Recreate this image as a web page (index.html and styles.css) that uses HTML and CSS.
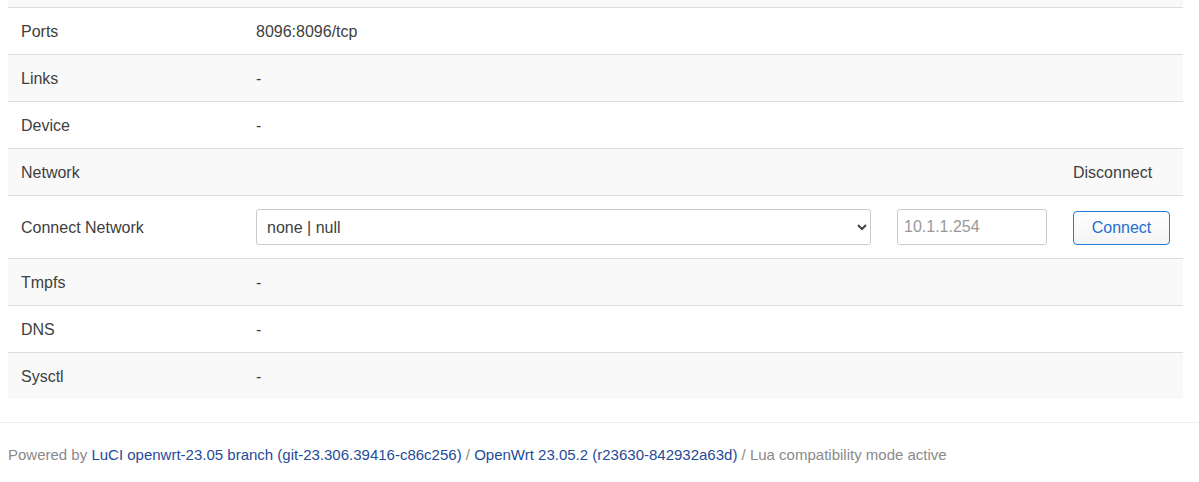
FILE: index.html
```html
<!DOCTYPE html>
<html>
<head>
<meta charset="utf-8">
<link rel="stylesheet" href="styles.css">
</head>
<body>
<div class="page">
  <div class="table">
    <div class="row row-partial"></div>
    <div class="row"><div class="cell label">Ports</div><div class="cell value">8096:8096/tcp</div></div>
    <div class="row alt"><div class="cell label">Links</div><div class="cell value">-</div></div>
    <div class="row"><div class="cell label">Device</div><div class="cell value">-</div></div>
    <div class="row alt net"><div class="cell label">Network</div><div class="cell"></div><div class="cell"></div><div class="cell">Disconnect</div></div>
    <div class="row net connect">
      <div class="cell label">Connect Network</div>
      <div class="cell"><select class="sel"><option>none | null</option></select></div>
      <div class="cell"><input class="ip" type="text" placeholder="10.1.1.254"></div>
      <div class="cell"><button class="btn">Connect</button></div>
    </div>
    <div class="row alt"><div class="cell label">Tmpfs</div><div class="cell value">-</div></div>
    <div class="row"><div class="cell label">DNS</div><div class="cell value">-</div></div>
    <div class="row alt"><div class="cell label">Sysctl</div><div class="cell value">-</div></div>
  </div>
</div>
<footer class="footer">
  <span>Powered by </span><a href="#">LuCI openwrt-23.05 branch (git-23.306.39416-c86c256)</a> / <a href="#">OpenWrt 23.05.2 (r23630-842932a63d)</a> / Lua compatibility mode active
</footer>
</body>
</html>
```

FILE: styles.css
```css
html, body {
  margin: 0;
  padding: 0;
  background: #fff;
}
body {
  font-family: "Liberation Sans", Arial, sans-serif;
  font-size: 16px;
  color: #404040;
}
.page {
  padding: 0 16px 0 8px;
}
.table {
  display: flex;
  flex-direction: column;
}
.row {
  display: grid;
  grid-template-columns: 235px 1fr;
  align-items: center;
  border-top: 1px solid #ddd;
  background: #fff;
}
.row.alt,
.row-partial {
  background: #f9f9f9;
}
.row-partial {
  height: 7px;
  border-top: none;
}
.row.net {
  grid-template-columns: 235px 641px 176px 123px;
}
.cell {
  padding: 14px 13px 12px;
  line-height: 20px;
  min-height: 20px;
}
.connect .cell {
  padding: 13px 13px;
}
.connect .label {
  padding-top: 14px;
  padding-bottom: 12px;
}
.label {
  color: #404040;
}
.sel {
  display: block;
  width: 100%;
  height: 36px;
  box-sizing: border-box;
  border: 1px solid #ccc;
  border-radius: 3px;
  padding: 0 6px;
  font-family: "Liberation Sans", Arial, sans-serif;
  font-size: 16px;
  color: #404040;
  background: #fff;
}
.ip {
  display: block;
  width: 100%;
  height: 36px;
  box-sizing: border-box;
  border: 1px solid #ccc;
  border-radius: 3px;
  padding: 0 6px;
  font-family: "Liberation Sans", Arial, sans-serif;
  font-size: 16px;
  color: #404040;
}
.ip::placeholder {
  color: #999;
}
.btn {
  display: block;
  width: 97px;
  height: 34px;
  margin-top: 1px;
  box-sizing: border-box;
  border: 1px solid #1f7ad8;
  border-radius: 4px;
  background: linear-gradient(#fff, #f4f4f4);
  color: #1f6fd0;
  font-family: "Liberation Sans", Arial, sans-serif;
  font-size: 16px;
  padding: 0;
}
.footer {
  margin-top: 23px;
  border-top: 1px solid #eee;
  padding: 22px 8px 20px;
  font-size: 15px;
  line-height: 20px;
  color: #8a8a8a;
}
.footer a {
  color: #1f4b99;
  text-decoration: none;
}
```
